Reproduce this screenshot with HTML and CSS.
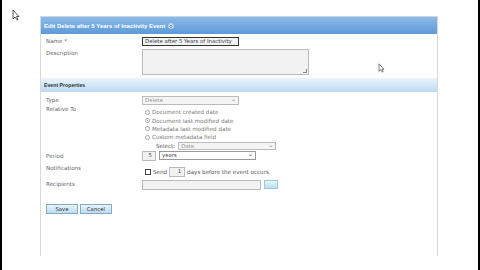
FILE: index.html
```html
<!DOCTYPE html>
<html lang="en">
<head>
    <meta charset="UTF-8">
    <title>Edit Event</title>
    <link rel="stylesheet" href="styles.css">
</head>
<body>
    <div class="screen">
        <div class="cursor">
            <svg width="8" height="12" viewBox="0 0 8 12"><path d="M1 1 L1 10 L3 8 L5 11 L6 10.5 L4.5 7.5 L7 7.5 Z" fill="#fff" stroke="#333" stroke-width="0.8"/></svg>
        </div>
        <div class="cursor cursor-2">
            <svg width="7" height="10" viewBox="0 0 8 12"><path d="M1 1 L1 10 L3 8 L5 11 L6 10.5 L4.5 7.5 L7 7.5 Z" fill="#fff" stroke="#444" stroke-width="0.8"/></svg>
        </div>

        <div class="panel">
            <div class="panel-header">
                <span>Edit Delete after 5 Years of Inactivity Event</span>
                <svg class="chev" width="6" height="6" viewBox="0 0 8 8"><circle cx="4" cy="4" r="3.6" fill="#dbe9f8"/><path d="M2 2.2 L4 4.2 L6 2.2 M2 4.4 L4 6.4 L6 4.4" fill="none" stroke="#2a5a9a" stroke-width="1"/></svg>
            </div>

            <div class="row name-row">
                <div class="label">Name *</div>
                <div class="field"><div class="input name-input">Delete after 5 Years of Inactivity</div></div>
            </div>
            <div class="row desc-row">
                <div class="label">Description</div>
                <div class="field"><div class="textarea"><span class="grip"></span></div></div>
            </div>

            <div class="section-header">Event Properties</div>

            <div class="row type-row">
                <div class="label">Type</div>
                <div class="field"><div class="select type-select">Delete<span class="arrow">&#8964;</span></div></div>
            </div>
            <div class="row">
                <div class="label">Relative To</div>
                <div class="field radios">
                    <div class="radio-line"><span class="radio"></span>Document created date</div>
                    <div class="radio-line"><span class="radio checked"></span>Document last modified date</div>
                    <div class="radio-line"><span class="radio"></span>Metadata last modified date</div>
                    <div class="radio-line"><span class="radio"></span>Custom metadata field</div>
                    <div class="select-line">Select: <div class="select meta-select">Date<span class="arrow">&#8964;</span></div></div>
                </div>
            </div>
            <div class="row period-row">
                <div class="label tall">Period</div>
                <div class="field inline">
                    <div class="input num">5</div>
                    <div class="select period-select">years<span class="arrow dark">&#8964;</span></div>
                </div>
            </div>
            <div class="row notify-row">
                <div class="label raised">Notifications</div>
                <div class="field inline notify">
                    <span class="checkbox"></span>Send
                    <div class="input num small">1</div>
                    days before the event occurs.
                </div>
            </div>
            <div class="row recip-row">
                <div class="label">Recipients</div>
                <div class="field inline">
                    <div class="input recipients"></div>
                    <div class="pick-btn"></div>
                </div>
            </div>

            <div class="actions">
                <button>Save</button>
                <button>Cancel</button>
            </div>
        </div>
    </div>
</body>
</html>
```

FILE: styles.css
```css
* {
    margin: 0;
    padding: 0;
    box-sizing: border-box;
}

body {
    font-family: "DejaVu Sans", Verdana, sans-serif;
    font-size: 5.6px;
    color: #666;
    background: #fff;
}

.screen {
    width: 480px;
    height: 270px;
    border-left: 2px solid #000;
    border-right: 2px solid #000;
    position: relative;
    padding-top: 16px;
    padding-left: 38px;
    overflow: hidden;
}

.cursor {
    position: absolute;
    left: 10px;
    top: 9px;
}

.cursor-2 {
    left: 376px;
    top: 63px;
}

.panel {
    width: 398px;
    height: 240px;
    border-left: 1px solid #d8d8d8;
    border-right: 1px solid #d8d8d8;
    border-top: 1px solid #c8d8e8;
}

.panel-header {
    height: 17px;
    background: linear-gradient(#8dbbe8, #5d9ad8);
    color: #fff;
    font-family: "Liberation Sans", Arial, sans-serif;
    font-weight: bold;
    font-size: 6px;
    display: flex;
    align-items: center;
    gap: 3px;
    padding-left: 3px;
}

.row {
    display: flex;
    padding-left: 5px;
}

.label {
    width: 96px;
    line-height: 9px;
}

.label.tall {
    line-height: 10px;
}

.label.raised {
    margin-top: -3px;
}

.name-row {
    margin-top: 3px;
}

.desc-row {
    margin-top: 3px;
}

.type-row {
    margin-top: 4px;
}

.period-row {
    margin-top: 1px;
}

.notify-row {
    margin-top: 6px;
}

.recip-row {
    margin-top: 3px;
}

.input, .select, .textarea {
    height: 9px;
    border: 1px solid #bbb;
    background: #f2f2f2;
    color: #999;
    line-height: 7px;
    padding-left: 2px;
    font-size: 5.4px;
}

.name-input {
    width: 97px;
    border: 1px solid #333;
    color: #444;
}

.textarea {
    width: 167px;
    height: 26px;
    position: relative;
}

.grip {
    position: absolute;
    right: 1px;
    bottom: 1px;
    width: 4px;
    height: 4px;
    border-right: 1px solid #888;
    border-bottom: 1px solid #888;
}

.section-header {
    height: 14px;
    margin-top: 3px;
    background: linear-gradient(#eaf5fc, #b9dbf2);
    color: #333;
    font-family: "Liberation Sans", Arial, sans-serif;
    font-weight: bold;
    font-size: 5.2px;
    display: flex;
    align-items: center;
    padding-left: 3px;
}

.select {
    display: flex;
    justify-content: space-between;
    background: #f4f4f4;
}

.arrow {
    padding-right: 2px;
    font-size: 6px;
    line-height: 4px;
    color: #888;
}

.arrow.dark {
    color: #333;
}

.type-select {
    width: 97px;
}

.radios {
    padding-top: 3px;
    color: #777;
}

.radio-line {
    display: flex;
    align-items: center;
    height: 8.4px;
    padding-left: 3px;
}

.radio {
    width: 5px;
    height: 5px;
    border: 1px solid #aaa;
    border-radius: 50%;
    margin-right: 2px;
    background: #fff;
}

.radio.checked {
    background: radial-gradient(#999 35%, #fff 45%);
}

.select-line {
    display: flex;
    align-items: center;
    gap: 3px;
    padding-left: 14px;
    color: #555;
}

.meta-select {
    width: 98px;
    height: 8px;
}

.inline {
    display: flex;
    align-items: center;
    gap: 3px;
}

.num {
    width: 14px;
    height: 10px;
    text-align: right;
    padding-right: 3px;
    color: #444;
}

.period-select {
    width: 97px;
    color: #444;
    background: #fff;
    border-color: #999;
}

.notify {
    gap: 2px;
    color: #555;
}

.checkbox {
    width: 6px;
    height: 6px;
    border: 1px solid #444;
    background: #fff;
    margin-left: 3px;
}

.small {
    width: 16px;
}

.recipients {
    width: 119px;
    height: 10px;
}

.pick-btn {
    width: 14px;
    height: 9px;
    border: 1px solid #9cc;
    background: linear-gradient(#e6f4fc, #bcdcf2);
}

.actions {
    display: flex;
    gap: 2px;
    padding-left: 5px;
    margin-top: 14px;
}

button {
    width: 32px;
    height: 10px;
    border: 1px solid #8ab;
    background: linear-gradient(#e8f4fc, #bcdcf2);
    font-family: "DejaVu Sans", Verdana, sans-serif;
    font-size: 5.4px;
    color: #333;
}
```
